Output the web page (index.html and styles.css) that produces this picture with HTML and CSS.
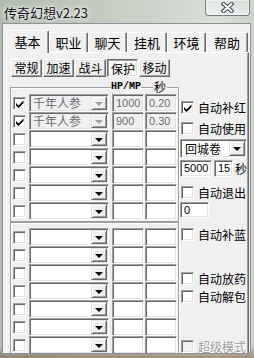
FILE: index.html
```html
<!DOCTYPE html>
<html lang="zh">
<head>
  <meta charset="UTF-8">
  <title>传奇幻想v2.23</title>
  <link rel="stylesheet" href="styles.css">
</head>
<body>
  <div class="window">
    <div class="titlebar">
      <span class="title">传奇幻想v2.23</span>
      <div class="close">
        <svg width="13" height="11" viewBox="0 0 13 11">
          <path d="M2.5 2 L10.5 9 M10.5 2 L2.5 9" stroke="#3a434d" stroke-width="4" stroke-linecap="square"/>
          <path d="M2.5 2 L10.5 9 M10.5 2 L2.5 9" stroke="#fff" stroke-width="2" stroke-linecap="square"/>
        </svg>
      </div>
    </div>

    <div class="client">
      <div class="tabstrip">
        <div class="tab active">基本</div>
        <div class="tab">职业</div>
        <div class="tab">聊天</div>
        <div class="tab wide">挂机</div>
        <div class="tab">环境</div>
        <div class="tab last">帮助</div>
      </div>

      <div class="panel">
        <div class="subtabs">
          <button class="btn">常规</button>
          <button class="btn">加速</button>
          <button class="btn">战斗</button>
          <button class="btn pressed">保护</button>
          <button class="btn">移动</button>
        </div>

        <div class="main">
          <div class="left">
            <div class="group first">
              <span class="gl gl-hp">HP/MP</span>
              <span class="gl gl-sec">秒</span>

              <div class="row">
                <span class="cb"><svg width="8" height="8" viewBox="0 0 8 8"><polygon points="0,3 2.5,5.5 7.5,0.5 7.5,3 2.5,8 0,5.5"/></svg></span>
                <div class="combo disabled"><span class="val">千年人参</span><span class="drop"></span></div>
                <span class="field disabled">1000</span>
                <span class="field sec disabled">0.20</span>
              </div>
              <div class="row">
                <span class="cb"><svg width="8" height="8" viewBox="0 0 8 8"><polygon points="0,3 2.5,5.5 7.5,0.5 7.5,3 2.5,8 0,5.5"/></svg></span>
                <div class="combo disabled"><span class="val">千年人参</span><span class="drop"></span></div>
                <span class="field disabled">900</span>
                <span class="field sec disabled">0.30</span>
              </div>
              <div class="row">
                <span class="cb"></span>
                <div class="combo"><span class="val"></span><span class="drop"></span></div>
                <span class="field"></span>
                <span class="field sec"></span>
              </div>
              <div class="row">
                <span class="cb"></span>
                <div class="combo"><span class="val"></span><span class="drop"></span></div>
                <span class="field"></span>
                <span class="field sec"></span>
              </div>
              <div class="row">
                <span class="cb"></span>
                <div class="combo"><span class="val"></span><span class="drop"></span></div>
                <span class="field"></span>
                <span class="field sec"></span>
              </div>
              <div class="row">
                <span class="cb"></span>
                <div class="combo"><span class="val"></span><span class="drop"></span></div>
                <span class="field"></span>
                <span class="field sec"></span>
              </div>
              <div class="row">
                <span class="cb"></span>
                <div class="combo"><span class="val"></span><span class="drop"></span></div>
                <span class="field"></span>
                <span class="field sec"></span>
              </div>
            </div>

            <div class="group second">
              <div class="row">
                <span class="cb"></span>
                <div class="combo"><span class="val"></span><span class="drop"></span></div>
                <span class="field"></span>
                <span class="field sec"></span>
              </div>
              <div class="row">
                <span class="cb"></span>
                <div class="combo"><span class="val"></span><span class="drop"></span></div>
                <span class="field"></span>
                <span class="field sec"></span>
              </div>
              <div class="row">
                <span class="cb"></span>
                <div class="combo"><span class="val"></span><span class="drop"></span></div>
                <span class="field"></span>
                <span class="field sec"></span>
              </div>
              <div class="row">
                <span class="cb"></span>
                <div class="combo"><span class="val"></span><span class="drop"></span></div>
                <span class="field"></span>
                <span class="field sec"></span>
              </div>
              <div class="row">
                <span class="cb"></span>
                <div class="combo"><span class="val"></span><span class="drop"></span></div>
                <span class="field"></span>
                <span class="field sec"></span>
              </div>
              <div class="row">
                <span class="cb"></span>
                <div class="combo"><span class="val"></span><span class="drop"></span></div>
                <span class="field"></span>
                <span class="field sec"></span>
              </div>
              <div class="row">
                <span class="cb"></span>
                <div class="combo"><span class="val"></span><span class="drop"></span></div>
                <span class="field"></span>
                <span class="field sec"></span>
              </div>
            </div>
          </div>

          <div class="side">
            <label class="check auto-red">
              <span class="cb"><svg width="8" height="8" viewBox="0 0 8 8"><polygon points="0,3 2.5,5.5 7.5,0.5 7.5,3 2.5,8 0,5.5"/></svg></span>
              <span class="lbl">自动补红</span>
            </label>
            <label class="check auto-use">
              <span class="cb"></span>
              <span class="lbl">自动使用</span>
            </label>
            <div class="combo town"><span class="val">回城卷</span><span class="drop"></span></div>
            <div class="timer">
              <span class="input w5000">5000</span>
              <span class="input w15">15</span>
              <span class="unit">秒</span>
            </div>
            <label class="check auto-exit">
              <span class="cb"></span>
              <span class="lbl">自动退出</span>
            </label>
            <span class="input exit-hp">0</span>
            <label class="check auto-blue">
              <span class="cb"></span>
              <span class="lbl">自动补蓝</span>
            </label>
            <label class="check auto-drug">
              <span class="cb"></span>
              <span class="lbl">自动放药</span>
            </label>
            <label class="check auto-unpack">
              <span class="cb"></span>
              <span class="lbl">自动解包</span>
            </label>
            <label class="check super disabled">
              <span class="cb"></span>
              <span class="lbl">超级模式</span>
            </label>
          </div>
        </div>
      </div>
    </div>
  </div>
</body>
</html>
```

FILE: styles.css
```css
* {
  box-sizing: border-box;
}

body {
  margin: 0;
  width: 254px;
  height: 358px;
  overflow: hidden;
  font-family: "Noto Sans CJK SC", "Liberation Sans", sans-serif;
  font-size: 12px;
  color: #000;
  background: #c3cbc0;
}

.window {
  position: relative;
  width: 254px;
  height: 358px;
  background:
    linear-gradient(180deg, rgba(0, 0, 0, 0) 346px, rgba(120, 80, 60, 0.55) 358px),
    linear-gradient(90deg, #b1bbae 0%, #c2cabf 35%, #d0d6cd 65%, #dadfd8 85%, #ccd2c9 100%);
}

/* title bar */
.titlebar {
  height: 23px;
  display: flex;
  align-items: center;
  padding-left: 4px;
}

.title {
  font-size: 13px;
  line-height: 15px;
  padding-top: 2px;
  color: #141414;
  text-shadow: 0 0 4px #fff, 0 0 6px #fff;
}

.close {
  position: absolute;
  top: 0;
  right: 4px;
  width: 45px;
  height: 16px;
  border: 1px solid rgba(70, 80, 95, 0.7);
  border-top: none;
  border-radius: 0 0 4px 4px;
  background: linear-gradient(180deg, rgba(255, 255, 255, 0.2), rgba(255, 255, 255, 0.55));
  box-shadow: inset 0 0 0 1px rgba(255, 255, 255, 0.45);
  display: flex;
  align-items: center;
  justify-content: center;
}

/* client area */
.client {
  margin-left: 2px;
  width: 249px;
  height: 331px;
  background: #f0f0f0;
  border: 1px solid #8d9297;
  overflow: hidden;
  padding: 6px 0 0 3px;
}

.tabstrip {
  position: relative;
  z-index: 1;
  display: flex;
  align-items: flex-end;
  height: 22px;
}

.tab {
  width: 39px;
  height: 20px;
  background: #f0f0f0;
  border: 1px solid #fff;
  border-bottom: none;
  border-right-color: #696969;
  border-radius: 2px 2px 0 0;
  box-shadow: inset -1px 0 #a0a0a0;
  display: flex;
  align-items: center;
  justify-content: center;
  font-size: 13px;
  line-height: 15px;
}

.tab.active {
  width: 43px;
  height: 23px;
  margin-bottom: -1px;
  padding-bottom: 2px;
}

.tab.wide {
  width: 40px;
}

.tab.last {
  width: 42px;
}

.panel {
  width: 243px;
  height: 310px;
  border-top: 1px solid #fff;
  border-left: 1px solid #fff;
  border-right: 1px solid #696969;
  box-shadow: inset -1px 0 #a0a0a0;
  padding: 6px 0 0 4px;
}

/* sub buttons */
.subtabs {
  display: flex;
  gap: 1px;
}

.btn {
  width: 31px;
  height: 18px;
  padding: 0;
  font: inherit;
  font-size: 12px;
  line-height: 14px;
  color: #000;
  background: #f0f0f0;
  border: 1px solid;
  border-color: #fff #696969 #696969 #fff;
  box-shadow: inset -1px -1px #a0a0a0, inset 1px 1px #e3e3e3;
}

.btn.pressed {
  border-color: #696969 #fff #fff #696969;
  box-shadow: inset 1px 1px #a0a0a0, inset -1px -1px #e3e3e3;
  background: repeating-conic-gradient(#fff 0 25%, #f0f0f0 0 50%) 0 0 / 2px 2px;
  padding: 1px 0 0 1px;
}

.main {
  display: flex;
  align-items: flex-start;
  margin-top: 10px;
  margin-left: -1px;
}

/* item groups */
.group {
  position: relative;
  width: 169px;
  border: 1px solid #a0a0a0;
  box-shadow: inset 1px 1px #fff, 1px 1px #fff;
  padding: 6px 0 1px 2px;
}

.group.second {
  padding-top: 5px;
}

.gl {
  position: absolute;
  top: -7px;
  background: #f0f0f0;
  line-height: 12px;
}

.gl-hp {
  left: 100px;
  font-family: "Liberation Mono", monospace;
  font-size: 10px;
  font-weight: bold;
}

.gl-sec {
  left: 142px;
  font-size: 12px;
  padding: 0 1px;
}

.row {
  display: flex;
  align-items: center;
  height: 18px;
}

.cb {
  width: 13px;
  height: 13px;
  flex: none;
  background: #fff;
  border: 1px solid;
  border-color: #a0a0a0 #fff #fff #a0a0a0;
  box-shadow: inset 1px 1px #696969, inset -1px -1px #e3e3e3;
  display: flex;
  align-items: center;
  justify-content: center;
}

.cb svg {
  fill: #000;
  margin-top: 1px;
}

.combo {
  width: 80px;
  height: 18px;
  margin-left: 3px;
  display: flex;
  background: #fff;
  border: 1px solid;
  border-color: #a0a0a0 #fff #fff #a0a0a0;
  box-shadow: inset 1px 1px #696969, inset -1px -1px #e3e3e3;
  padding: 1px;
}

.combo .val {
  flex: 1;
  padding-left: 2px;
  line-height: 14px;
  white-space: nowrap;
}

.drop {
  width: 16px;
  height: 14px;
  flex: none;
  background: #f0f0f0;
  border: 1px solid;
  border-color: #e3e3e3 #696969 #696969 #e3e3e3;
  box-shadow: inset 1px 1px #fff, inset -1px -1px #a0a0a0;
  display: flex;
  align-items: center;
  justify-content: center;
}

.drop::after {
  content: "";
  width: 0;
  height: 0;
  margin-top: 1px;
  border-left: 4px solid transparent;
  border-right: 4px solid transparent;
  border-top: 4px solid #000;
}

.combo.disabled {
  background: #f0f0f0;
  color: #6d6d6d;
}

.combo.disabled .drop::after {
  border-top-color: #a0a0a0;
}

.field,
.input {
  height: 18px;
  flex: none;
  background: #fff;
  border: 1px solid;
  border-color: #a0a0a0 #fff #fff #a0a0a0;
  box-shadow: inset 1px 1px #696969, inset -1px -1px #e3e3e3;
  padding-left: 3px;
  font-family: "Liberation Sans", sans-serif;
  font-size: 11px;
  line-height: 16px;
}

.field {
  width: 32px;
  margin-left: 3px;
}

.field.sec {
  margin-left: 1px;
}

.field.disabled {
  background: #f0f0f0;
  color: #6d6d6d;
}

/* right column */
.side {
  width: 67px;
  margin-left: 1px;
  display: flex;
  flex-direction: column;
  align-items: flex-start;
}

.check {
  display: flex;
  align-items: center;
  height: 13px;
  margin-left: 1px;
}

.check .lbl {
  margin-left: 4px;
  line-height: 13px;
  white-space: nowrap;
}

.auto-red { margin-top: 14px; }
.auto-use { margin-top: 8px; }
.auto-exit { margin-top: 9px; }
.auto-blue { margin-top: 10px; }
.auto-drug { margin-top: 31px; }
.auto-unpack { margin-top: 5px; }
.super { margin-top: 37px; }

.check.disabled .cb {
  background: #f0f0f0;
}

.check.disabled .lbl {
  color: #a0a0a0;
  text-shadow: 1px 1px #fff;
}

.combo.town {
  width: 67px;
  height: 19px;
  margin: 4px 0 0;
}

.combo.town .drop {
  height: 15px;
}

.combo.town .val {
  padding-left: 3px;
  line-height: 15px;
}

.timer {
  display: flex;
  align-items: center;
  margin-top: 2px;
}

.input {
  height: 17px;
  line-height: 15px;
}

.w5000 {
  width: 32px;
}

.w15 {
  width: 19px;
  margin-left: 2px;
}

.unit {
  margin-left: 2px;
  line-height: 15px;
}

.exit-hp {
  width: 29px;
  height: 16px;
  line-height: 14px;
  margin-top: 3px;
}
```
